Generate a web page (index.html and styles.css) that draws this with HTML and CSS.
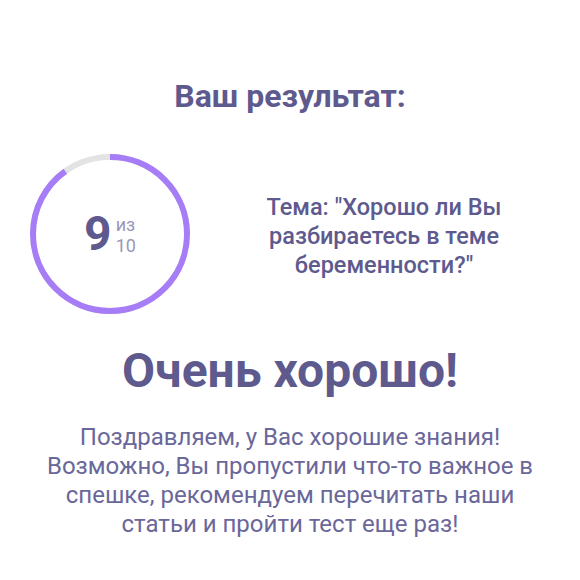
FILE: index.html
```html
<!DOCTYPE html>
<html lang="ru">
<head>
    <meta charset="UTF-8">
    <meta name="viewport" content="width=device-width, initial-scale=1.0">
    <title>Результат теста</title>
    <link rel="stylesheet" href="styles.css">
</head>
<body>
    <div class="result">
        <h2 class="result-title">Ваш результат:</h2>

        <div class="result-row">
            <div class="score">
                <!-- кольцо прогресса: 9 из 10 -->
                <svg class="score-ring" width="164" height="164" viewBox="0 0 164 164">
                    <circle class="ring-bg" cx="82" cy="82" r="77"></circle>
                    <circle class="ring-fill" cx="82" cy="82" r="77"
                            stroke-dasharray="435.4 483.8" transform="rotate(-90 82 82)"></circle>
                </svg>
                <div class="score-value">
                    <span class="score-num">9</span>
                    <span class="score-of">
                        <span>из</span>
                        <span>10</span>
                    </span>
                </div>
            </div>
            <p class="result-topic">Тема: "Хорошо ли Вы разбираетесь в теме беременности?"</p>
        </div>

        <h1 class="result-grade">Очень хорошо!</h1>
        <p class="result-text">Поздравляем, у Вас хорошие знания!<br>
            Возможно, Вы пропустили что-то важное в<br>
            спешке, рекомендуем перечитать наши<br>
            статьи и пройти тест еще раз!</p>
    </div>
</body>
</html>
```

FILE: styles.css
```css
*{
    margin: 0;
    padding: 0;
    box-sizing: border-box;
}
body{
    background: #fff;
    font-family: Roboto, "Liberation Sans", sans-serif;
    color: #5e5a8e;
}
.result{
    width: 580px;
    padding: 78px 0 0;
    text-align: center;
}
.result-title{
    font-size: 32px;
    font-weight: 700;
    line-height: 36px;
}
.result-row{
    display: flex;
    align-items: center;
    margin-top: 38px;
    padding-left: 28px;
}
.score{
    position: relative;
    width: 164px;
    height: 164px;
    flex-shrink: 0;
}
.score-ring{
    display: block;
}
.score-ring circle{
    fill: none;
    stroke-width: 6;
}
.ring-bg{
    stroke: #e3e3e3;
}
.ring-fill{
    stroke: #a67cf7;
}
/* число поверх кольца */
.score-value{
    position: absolute;
    inset: 0;
    display: flex;
    align-items: center;
    justify-content: center;
}
.score-num{
    font-size: 48px;
    font-weight: 700;
    line-height: 1;
}
.score-of{
    display: flex;
    flex-direction: column;
    margin-left: 4px;
    margin-top: 2px;
    font-size: 18px;
    line-height: 21px;
    color: #9a97b9;
    text-align: left;
}
.result-topic{
    flex: 1;
    padding: 4px 56px 0 52px;
    font-size: 23.5px;
    font-weight: 500;
    line-height: 29px;
}
.result-grade{
    margin-top: 28px;
    font-size: 48px;
    font-weight: 700;
    line-height: 54px;
}
.result-text{
    margin-top: 25px;
    font-size: 24px;
    line-height: 29px;
    color: #6a679a;
}
```
